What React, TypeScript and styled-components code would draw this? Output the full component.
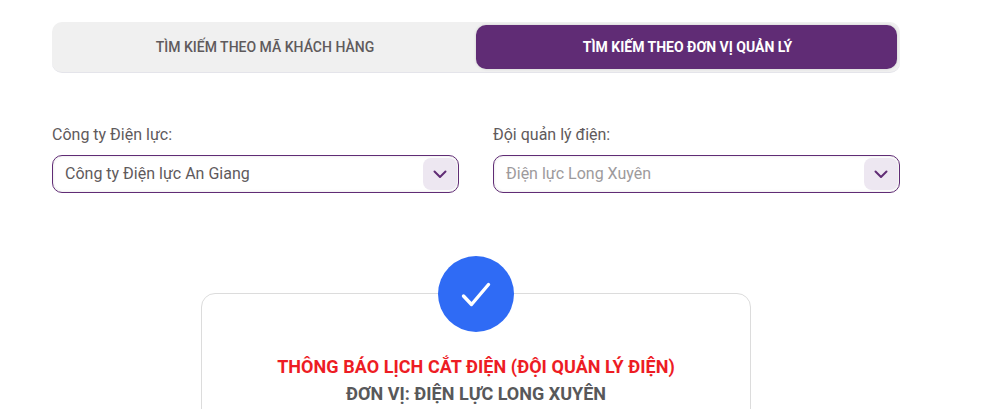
import React, { FC } from 'react';
import styled, { createGlobalStyle } from 'styled-components';

const GlobalStyle = createGlobalStyle`
  html, body {
    margin: 0;
    padding: 0;
    height: 409px;
    overflow: hidden;
    background: #fff;
    font-family: Roboto, "Liberation Sans", sans-serif;
  }
`;

const Page = styled.div`
  width: 848px;
  height: 387px;
  margin-left: 52px;
  padding-top: 22px;
  overflow: hidden;
  color: #5a5a5a;
`;

const Tabs = styled.div`
  display: grid;
  grid-template-columns: 424px 1fr;
  height: 51px;
  box-sizing: border-box;
  padding: 3px 3px 3px 0;
  background: #f0f0f0;
  border-radius: 10px;
  border-bottom: 1px solid #e4e4ea;
`;

const Tab = styled.div<{ $active?: boolean }>`
  display: flex;
  align-items: center;
  justify-content: center;
  padding-left: 2px;
  border-radius: 10px;
  font-size: 14px;
  font-weight: ${p => (p.$active ? 700 : 500)};
  color: ${p => (p.$active ? '#fff' : '#5f5a5c')};
  background: ${p => (p.$active ? '#602c75' : 'transparent')};
  box-shadow: ${p => (p.$active ? '0 0 3px rgba(0,0,0,.15)' : 'none')};
`;

const Fields = styled.div`
  display: grid;
  grid-template-columns: 407px 407px;
  column-gap: 34px;
  margin-top: 52px;
`;

const Field = styled.div`
  display: flex;
  flex-direction: column;
`;

const Label = styled.label`
  font-size: 16px;
  line-height: 20px;
  color: #5f5a5c;
  margin-bottom: 10px;
`;

const Select = styled.div`
  display: flex;
  align-items: center;
  justify-content: space-between;
  box-sizing: border-box;
  height: 38px;
  padding: 0 1px 0 12px;
  border: 1px solid #602c75;
  border-radius: 10px;
  background: #fff;
  box-shadow: inset 0 0 3px rgba(0, 0, 0, 0.12);
`;

const Value = styled.span<{ $disabled?: boolean }>`
  margin-top: -2px;
  font-size: 16px;
  color: ${p => (p.$disabled ? '#9d9a9c' : '#5f5a5c')};
`;

const Arrow = styled.span`
  display: flex;
  align-items: center;
  justify-content: center;
  width: 34px;
  height: 32px;
  border-radius: 8px;
  background: #ede7f1;
  color: #602c75;
`;

const Card = styled.div`
  position: relative;
  box-sizing: border-box;
  width: 550px;
  height: 300px;
  margin: 100px 0 0 149px;
  padding-top: 59px;
  border: 1px solid #dcdcdc;
  border-radius: 14px;
  text-align: center;
`;

const Badge = styled.div`
  position: absolute;
  top: -38px;
  left: 236px;
  width: 76px;
  height: 76px;
  display: flex;
  align-items: center;
  justify-content: center;
  border-radius: 50%;
  background: #2f6bf5;
`;

const Title = styled.div`
  font-size: 18px;
  line-height: 27px;
  font-weight: 700;
  letter-spacing: 0.05px;
  color: #ed1c24;
`;

const Subtitle = styled.div`
  font-size: 18px;
  line-height: 27px;
  font-weight: 700;
  color: #58585a;
`;

const Chevron: FC = () => (
  <svg width="14" height="9" viewBox="0 0 14 9" fill="none">
    <path d="M1.5 1.5 7 7l5.5-5.5" stroke="currentColor" strokeWidth="2" strokeLinecap="round" strokeLinejoin="round" />
  </svg>
);

const App: FC = () => (
  <>
    <GlobalStyle />
    <Page>
      <Tabs>
        <Tab>TÌM KIẾM THEO MÃ KHÁCH HÀNG</Tab>
        <Tab $active>TÌM KIẾM THEO ĐƠN VỊ QUẢN LÝ</Tab>
      </Tabs>
      <Fields>
        <Field>
          <Label>Công ty Điện lực:</Label>
          <Select>
            <Value>Công ty Điện lực An Giang</Value>
            <Arrow><Chevron /></Arrow>
          </Select>
        </Field>
        <Field>
          <Label>Đội quản lý điện:</Label>
          <Select>
            <Value $disabled>Điện lực Long Xuyên</Value>
            <Arrow><Chevron /></Arrow>
          </Select>
        </Field>
      </Fields>
      <Card>
        <Badge>
          <svg width="30" height="25" viewBox="0 0 30 25" fill="none">
            <path d="M2.5 14 10.5 22.5 27.5 2.5" stroke="#fff" strokeWidth="3.4" strokeLinecap="round" strokeLinejoin="round" />
          </svg>
        </Badge>
        <Title>THÔNG BÁO LỊCH CẮT ĐIỆN (ĐỘI QUẢN LÝ ĐIỆN)</Title>
        <Subtitle>ĐƠN VỊ: ĐIỆN LỰC LONG XUYÊN</Subtitle>
      </Card>
    </Page>
  </>
);

export default App;
